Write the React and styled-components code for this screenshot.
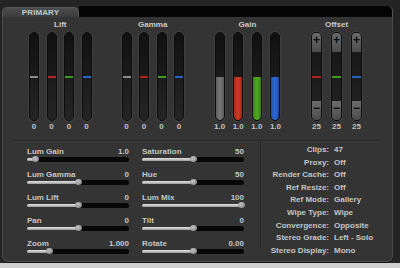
import React from 'react'
import styled, { createGlobalStyle } from 'styled-components'

const Global = createGlobalStyle`
  html, body {
    margin: 0;
    padding: 0;
    background: #cfcfcf;
  }
  body {
    font-family: "Liberation Sans", Arial, sans-serif;
  }
`

const Screen = styled.div`
  width: 400px;
  height: 263px;
  box-sizing: border-box;
  padding: 5px 7px 0 2px;
  background: #242424;
  display: flex;
  flex-direction: column;
`

const TabRow = styled.div`
  display: flex;
  height: 12px;
`

const Tab = styled.div`
  width: 77px;
  height: 10px;
  margin-top: 2px;
  box-sizing: border-box;
  border: 1px solid #565656;
  border-bottom: none;
  border-radius: 5px 5px 0 0;
  background: linear-gradient(#4c4c4c, #3b3b3b);
  color: #bfcad6;
  font-size: 8px;
  font-weight: 700;
  line-height: 9px;
  text-align: center;
  letter-spacing: 0.1px;
`

const TabFill = styled.div`
  flex: 1;
  background: #040404;
  border-radius: 0 6px 0 0;
  border-top: 1px solid #2a2a2a;
  border-right: 1px solid #555;
`

const Panel = styled.div`
  height: 245px;
  box-sizing: border-box;
  background: #343434;
  border: 1px solid #4a4a4a;
  border-top: none;
  border-radius: 0 0 6px 6px;
  box-shadow: 0 1px 0 #141414;
  display: flex;
  flex-direction: column;
  color: #c4c4c4;
  font-size: 8px;
  font-weight: 700;
`

const Channels = styled.div`
  display: flex;
  gap: 30px;
  padding-left: 26px;
  height: 123px;
`

const Group = styled.div`
  display: flex;
  flex-direction: column;
  align-items: center;
`

const GroupTitle = styled.div`
  margin-top: 3px;
  line-height: 10px;
  height: 10px;
  color: #cacaca;
`

const Bars = styled.div`
  margin-top: 2px;
  display: flex;
  gap: ${p => p.$gap}px;
`

const Column = styled.div`
  display: flex;
  flex-direction: column;
  align-items: center;
  gap: 1px;
`

const Track = styled.div`
  width: ${p => p.$w || 10}px;
  height: 89px;
  box-sizing: border-box;
  border-radius: 5px;
  border: 1px solid #0c0c0c;
  box-shadow: 0 0 0 1px #3f3f3f;
  background: #161616;
  overflow: hidden;
  display: flex;
  flex-direction: column;
`

const Upper = styled.div`
  flex: 1;
  background: linear-gradient(#111, #1a1a1a);
`

const Lower = styled.div`
  flex: 1;
  background: linear-gradient(#1c1c1c, #242424);
`

const Marker = styled.div`
  height: 2px;
  background: ${p => p.$c};
`

const Fill = styled.div`
  flex: 1;
  background: ${p => p.$c};
  border-radius: 0 0 4px 4px;
`

const Cap = styled.div`
  height: 19px;
  background: linear-gradient(#6c6c6c, #4c4c4c);
  color: #0d0d0d;
  font-size: 12px;
  font-weight: 700;
  line-height: 15px;
  text-align: center;
  border-bottom: ${p => (p.$top ? '1px solid #1a1a1a' : 'none')};
  border-top: ${p => (p.$top ? 'none' : '1px solid #1a1a1a')};
`

const Middle = styled.div`
  flex: 1;
  display: flex;
  flex-direction: column;
  justify-content: center;
  background: linear-gradient(#181818, #202020);
`

const Value = styled.div`
  line-height: 10px;
  height: 10px;
  color: #c2c2c2;
  white-space: nowrap;
`

const Rule = styled.div`
  margin: 0 12px 0 10px;
  height: 1px;
  background: #262626;
  box-shadow: 0 1px 0 #3c3c3c;
`

const Lower2 = styled.div`
  display: flex;
  flex: 1;
`

const Sliders = styled.div`
  display: grid;
  grid-template-columns: 102px 102px;
  column-gap: 13px;
  row-gap: 8px;
  padding: 6px 0 0 24px;
  align-content: start;
`

const SliderRow = styled.div`
  display: flex;
  flex-direction: column;
`

const SliderHead = styled.div`
  display: flex;
  justify-content: space-between;
  line-height: 9px;
  height: 9px;
  color: #c6c6c6;
`

const SliderTrack = styled.div`
  height: 6px;
  display: flex;
  align-items: center;
`

const SliderFill = styled.div`
  height: 3px;
  border-radius: 2px 0 0 2px;
  background: linear-gradient(#e8e8e8, #9a9a9a);
`

const Thumb = styled.div`
  width: 7px;
  height: 6px;
  margin: 0 -3px;
  border-radius: 50%;
  background: radial-gradient(circle at 40% 35%, #c4c4c4, #7a7a7a);
  position: relative;
  z-index: 1;
`

const SliderRest = styled.div`
  flex: 1;
  height: 5px;
  border-radius: 0 3px 3px 0;
  background: #070707;
`

const VRule = styled.div`
  width: 1px;
  height: 108px;
  margin-left: 16px;
  background: #262626;
  box-shadow: 1px 0 0 #3a3a3a;
`

const Info = styled.div`
  display: grid;
  grid-template-columns: 68px auto;
  column-gap: 5px;
  padding-top: 3px;
  align-content: start;
  line-height: 12.6px;
  color: #c6c6c6;
`

const InfoLabel = styled.div`
  text-align: right;
  white-space: nowrap;
`

const InfoValue = styled.div`
  white-space: nowrap;
`

const CH = ['#8a8a8a', '#b3251c', '#3f9a1e', '#2563c4']
const GAIN = [
  'linear-gradient(90deg, #5e5e5e, #787878 50%, #5a5a5a)',
  'linear-gradient(90deg, #a82a1a, #d23a26 50%, #a02414)',
  'linear-gradient(90deg, #3a8a16, #52a826 50%, #348012)',
  'linear-gradient(90deg, #1f4fb0, #2f6ad6 50%, #1a48a8)',
]

const Wheel = ({ title, values }) => (
  <Group>
    <GroupTitle>{title}</GroupTitle>
    <Bars $gap={7.5}>
      {CH.map((c, i) => (
        <Column key={i}>
          <Track>
            <Upper />
            <Marker $c={c} />
            <Lower />
          </Track>
          <Value>{values[i]}</Value>
        </Column>
      ))}
    </Bars>
  </Group>
)

const sliders = [
  ['Lum Gain', '1.0', 8],
  ['Saturation', '50', 50],
  ['Lum Gamma', '0', 50],
  ['Hue', '50', 50],
  ['Lum Lift', '0', 50],
  ['Lum Mix', '100', 97],
  ['Pan', '0', 50],
  ['Tilt', '0', 50],
  ['Zoom', '1.000', 21.5],
  ['Rotate', '0.00', 50],
]

const info = [
  ['Clips:', '47'],
  ['Proxy:', 'Off'],
  ['Render Cache:', 'Off'],
  ['Ref Resize:', 'Off'],
  ['Ref Mode:', 'Gallery'],
  ['Wipe Type:', 'Wipe'],
  ['Convergence:', 'Opposite'],
  ['Stereo Grade:', 'Left - Solo'],
  ['Stereo Display:', 'Mono'],
]

export default function App() {
  return (
    <>
      <Global />
      <Screen>
        <TabRow>
          <Tab>PRIMARY</Tab>
          <TabFill />
        </TabRow>
        <Panel>
          <Channels>
            <Wheel title="Lift" values={['0', '0', '0', '0']} />
            <Wheel title="Gamma" values={['0', '0', '0', '0']} />
            <Group>
              <GroupTitle>Gain</GroupTitle>
              <Bars $gap={7.5}>
                {GAIN.map((c, i) => (
                  <Column key={i}>
                    <Track>
                      <Upper />
                      <Fill $c={c} />
                    </Track>
                    <Value>1.0</Value>
                  </Column>
                ))}
              </Bars>
            </Group>
            <Group>
              <GroupTitle>Offset</GroupTitle>
              <Bars $gap={9}>
                {CH.slice(1).map((c, i) => (
                  <Column key={i}>
                    <Track $w={11}>
                      <Cap $top>+</Cap>
                      <Middle>
                        <Marker $c={c} />
                      </Middle>
                      <Cap>−</Cap>
                    </Track>
                    <Value>25</Value>
                  </Column>
                ))}
              </Bars>
            </Group>
          </Channels>
          <Rule />
          <Lower2>
            <Sliders>
              {sliders.map(([label, val, pct]) => (
                <SliderRow key={label}>
                  <SliderHead>
                    <span>{label}</span>
                    <span>{val}</span>
                  </SliderHead>
                  <SliderTrack>
                    <SliderFill style={{ width: `${pct}%` }} />
                    <Thumb />
                    <SliderRest />
                  </SliderTrack>
                </SliderRow>
              ))}
            </Sliders>
            <VRule />
            <Info>
              {info.map(([k, v]) => (
                <React.Fragment key={k}>
                  <InfoLabel>{k}</InfoLabel>
                  <InfoValue>{v}</InfoValue>
                </React.Fragment>
              ))}
            </Info>
          </Lower2>
        </Panel>
      </Screen>
    </>
  )
}
